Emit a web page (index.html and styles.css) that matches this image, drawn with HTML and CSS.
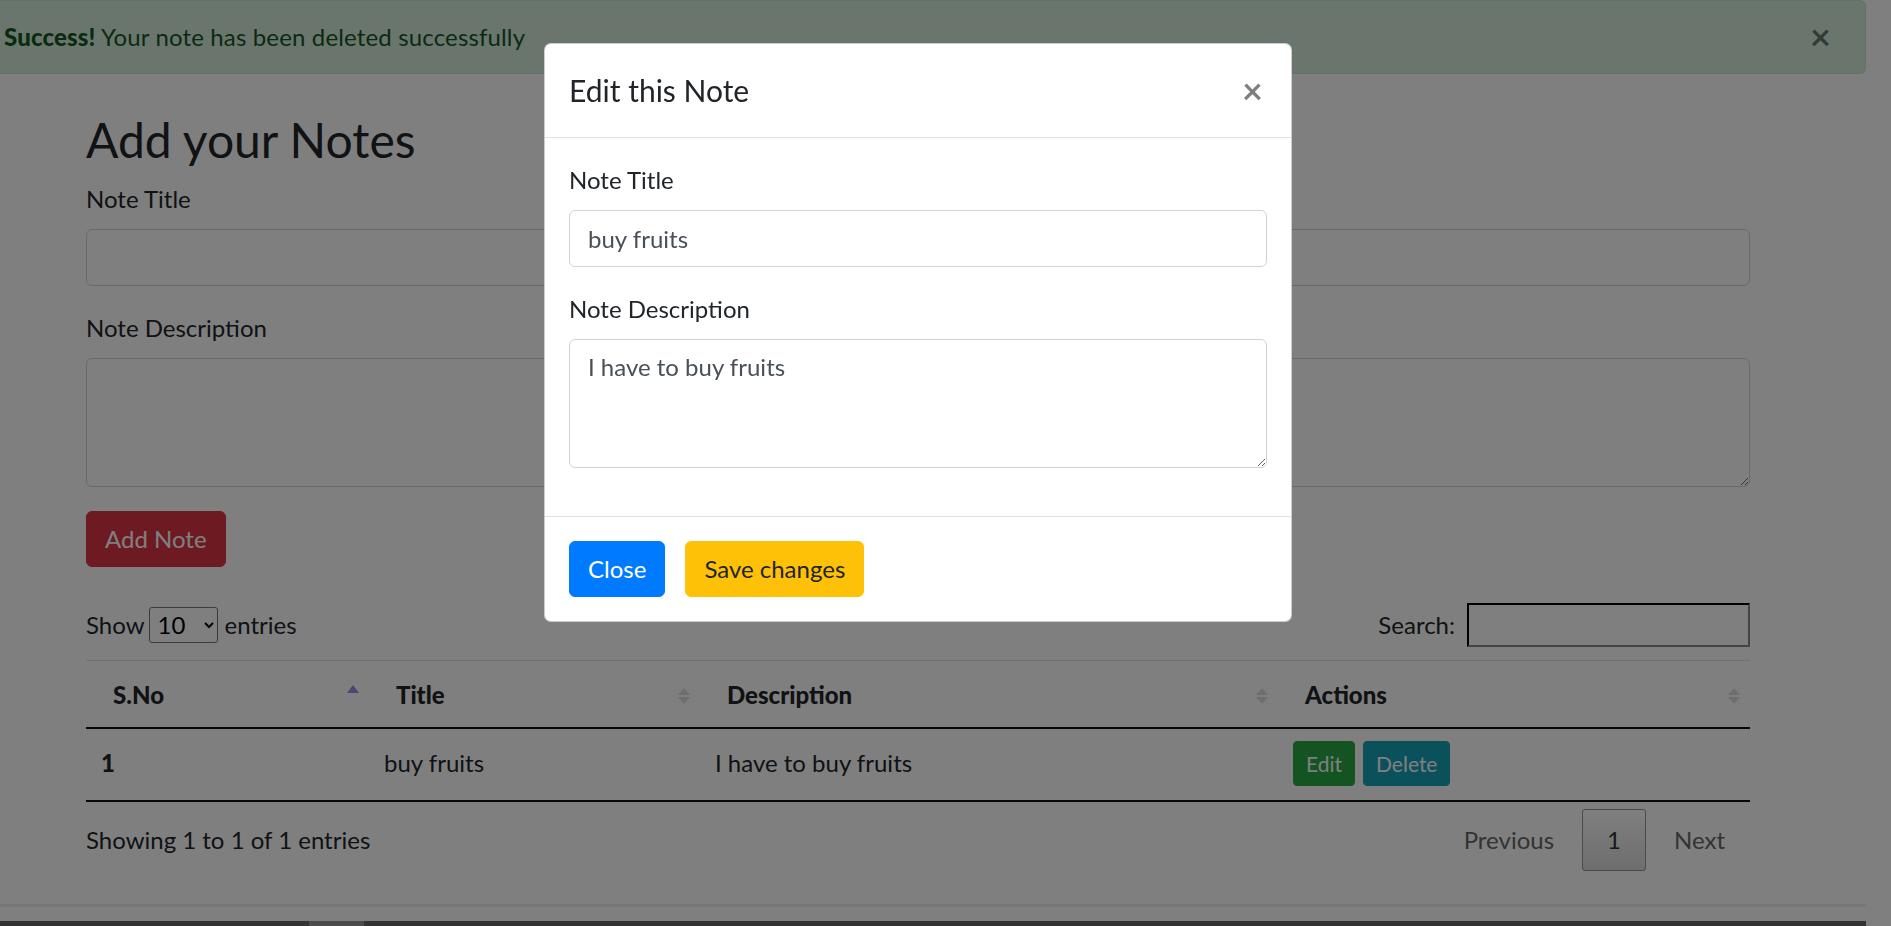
FILE: index.html
```html
<!DOCTYPE html>
<html lang="en">
<head>
<meta charset="utf-8">
<title>Notes</title>
<link rel="stylesheet" href="styles.css">
</head>
<body>
<div class="page">
  <div class="alert">
    <span><strong>Success!</strong> Your note has been deleted successfully</span>
    <button class="alert-close" type="button">&times;</button>
  </div>

  <div class="container">
    <h2 class="heading">Add your Notes</h2>
    <form class="note-form">
      <div class="form-group">
        <label class="form-label">Note Title</label>
        <input class="form-control" type="text">
      </div>
      <div class="form-group">
        <label class="form-label">Note Description</label>
        <textarea class="form-control form-area" rows="3"></textarea>
      </div>
      <button class="btn btn-danger" type="button">Add Note</button>
    </form>

    <div class="dt-wrapper">
      <div class="dt-top">
        <label class="dt-length">Show <select class="dt-select"><option>10</option></select> entries</label>
        <label class="dt-search">Search:<input class="dt-search-input" type="search"></label>
      </div>

      <table class="dt-table">
        <colgroup>
          <col class="col-sno"><col class="col-title"><col class="col-desc"><col class="col-actions">
        </colgroup>
        <thead>
          <tr>
            <th class="sort sort-asc">S.No</th>
            <th class="sort sort-both">Title</th>
            <th class="sort sort-both">Description</th>
            <th class="sort sort-both">Actions</th>
          </tr>
        </thead>
        <tbody>
          <tr>
            <th class="row-head">1</th>
            <td>buy fruits</td>
            <td>I have to buy fruits</td>
            <td><div class="actions"><button class="btn-sm btn-success" type="button">Edit</button><button class="btn-sm btn-info" type="button">Delete</button></div></td>
          </tr>
        </tbody>
      </table>

      <div class="dt-bottom">
        <div class="dt-info">Showing 1 to 1 of 1 entries</div>
        <div class="dt-paginate">
          <span class="page-btn disabled">Previous</span>
          <span class="page-btn current">1</span>
          <span class="page-btn disabled">Next</span>
        </div>
      </div>
    </div>
  </div>

  <div class="page-rule"></div>
  <div class="dark-strip"><span class="strip-thumb"></span></div>
</div>

<div class="backdrop"></div>

<div class="modal">
  <div class="modal-header">
    <h5 class="modal-title">Edit this Note</h5>
    <button class="modal-close" type="button">&times;</button>
  </div>
  <div class="modal-body">
    <div class="form-group">
      <label class="form-label">Note Title</label>
      <input class="form-control" type="text" value="buy fruits">
    </div>
    <div class="form-group">
      <label class="form-label">Note Description</label>
      <textarea class="form-control form-area" rows="3">I have to buy fruits</textarea>
    </div>
  </div>
  <div class="modal-footer">
    <button class="btn btn-primary" type="button">Close</button>
    <button class="btn btn-warning" type="button">Save changes</button>
  </div>
</div>
</body>
</html>
```

FILE: styles.css
```css
* { box-sizing: border-box; }

html, body {
  margin: 0;
  height: 926px;
  overflow: hidden;
}

body {
  width: 1891px;
  font-family: "Lato", "Noto Sans", sans-serif;
  font-size: 24px;
  line-height: 1.5;
  color: #212529;
  background: #fff;
}

.page { width: 1866px; }

/* alert */
.alert {
  position: relative;
  display: flex;
  align-items: center;
  height: 74px;
  padding: 0 4px;
  margin-bottom: 24px;
  background: #d4edda;
  border: 1px solid #c3e6cb;
  border-left: 0;
  border-radius: 0 6px 6px 0;
  color: #155724;
  letter-spacing: .15px;
}
.alert strong { font-weight: 900; }
.alert-close {
  position: absolute;
  right: 34px;
  top: 17px;
  padding: 0;
  border: 0;
  background: none;
  font-family: inherit;
  font-size: 36px;
  line-height: 36px;
  font-weight: 700;
  color: #000;
  opacity: .5;
}

/* container */
.container {
  width: 1664px;
  margin-left: 86px;
  padding-top: 13px;
}
.heading {
  margin: 0 0 12px;
  font-size: 48px;
  line-height: 1.2;
  font-weight: 400;
}
.form-group { margin-bottom: 24px; }
.form-label {
  display: block;
  margin-bottom: 12px;
}
.form-control {
  display: block;
  width: 100%;
  height: 57px;
  padding: 9px 18px;
  font-family: inherit;
  font-size: 24px;
  line-height: 1.5;
  color: #495057;
  background: #fff;
  border: 1px solid #ced4da;
  border-radius: 6px;
}
.form-area { height: 129px; resize: vertical; }

.btn {
  display: inline-block;
  padding: 9px 18px;
  font-family: inherit;
  font-size: 24px;
  line-height: 1.5;
  border: 1px solid transparent;
  border-radius: 6px;
  color: #fff;
}
.btn-danger { background: #dc3545; border-color: #dc3545; }
.btn-primary { background: #007bff; border-color: #007bff; }
.btn-warning { background: #ffc107; border-color: #ffc107; color: #212529; }

/* datatable */
.dt-wrapper { margin-top: 36px; }
.dt-top {
  display: flex;
  justify-content: space-between;
  align-items: center;
  height: 44px;
}
.dt-length { display: flex; align-items: center; }
.dt-select {
  width: 69px;
  height: 36px;
  margin: 0 7px 0 4px;
  padding: 0 4px;
  font-family: inherit;
  font-size: 24px;
  color: #000;
  background: #fff;
  border: 1px solid #767676;
  border-radius: 3px;
}
.dt-search { display: flex; align-items: center; }
.dt-search-input {
  width: 283px;
  height: 44px;
  margin-left: 12px;
  font-size: 24px;
  border: 2px solid;
  border-color: #000 #888 #888 #000;
  background: #fff;
}

.dt-table {
  width: 100%;
  margin-top: 13px;
  border-collapse: collapse;
  table-layout: fixed;
}
.col-sno { width: 283px; }
.col-title { width: 331px; }
.col-desc { width: 578px; }
.col-actions { width: 472px; }

.dt-table thead th {
  position: relative;
  padding: 16px 27px 14px;
  text-align: left;
  font-weight: 900;
  border-top: 1px solid #dee2e6;
  border-bottom: 2px solid #111;
}
.sort::after,
.sort-both::before {
  content: "";
  position: absolute;
  right: 10px;
  width: 0;
  height: 0;
  border-left: 6px solid transparent;
  border-right: 6px solid transparent;
}
.sort-asc::after {
  top: 24px;
  border-bottom: 8px solid #9090e8;
}
.sort-both::after {
  top: 27px;
  border-bottom: 7px solid #dcdcdc;
}
.sort-both::before {
  top: 36px;
  border-top: 7px solid #dcdcdc;
}

.dt-table tbody th,
.dt-table tbody td {
  padding: 12px 15px 14px;
  text-align: left;
  vertical-align: middle;
  border-bottom: 2px solid #111;
}
.row-head { font-weight: 900; }
.actions { display: flex; gap: 8px; }
.btn-sm {
  display: inline-block;
  padding: 6px 12px;
  font-family: inherit;
  font-size: 21px;
  line-height: 1.5;
  color: #fff;
  border: 1px solid transparent;
  border-radius: 4px;
}
.btn-success { background: #28a745; border-color: #28a745; }
.btn-info { background: #17a2b8; border-color: #17a2b8; }

.dt-bottom {
  display: flex;
  justify-content: space-between;
  align-items: center;
  margin-top: 7px;
}
.dt-paginate { display: flex; }
.page-btn {
  display: inline-block;
  padding: 12px 24px;
  margin-left: 3px;
  border: 1px solid transparent;
  border-radius: 3px;
  color: #666;
}
.page-btn.current {
  color: #333;
  border-color: #979797;
  background: linear-gradient(#fff 0%, #dcdcdc 100%);
}

.page-rule {
  margin-top: 33px;
  border-top: 3px solid #ececec;
}
.dark-strip {
  display: flex;
  margin-top: 14px;
  height: 12px;
  background: #666;
}
.strip-thumb {
  width: 55px;
  margin-left: 309px;
  background: #999;
}

/* overlay */
.backdrop {
  position: fixed;
  inset: 0;
  background: rgba(0, 0, 0, .5);
}

.modal {
  position: absolute;
  left: 544px;
  top: 43px;
  width: 748px;
  background: #fff;
  border: 1px solid rgba(0, 0, 0, .2);
  border-radius: 7px;
}
.modal-header {
  display: flex;
  align-items: flex-start;
  padding: 24px;
  border-bottom: 1px solid #dee2e6;
}
.modal-title {
  margin: 0;
  font-size: 30px;
  line-height: 1.5;
  font-weight: 400;
}
.modal-close {
  margin: -24px -20px -24px auto;
  padding: 24px;
  border: 0;
  background: none;
  font-family: inherit;
  font-size: 36px;
  line-height: 45px;
  font-weight: 700;
  color: #000;
  opacity: .5;
}
.modal-body { padding: 24px; }
.modal-body .form-group:last-child { margin-bottom: 24px; }
.modal-footer {
  display: flex;
  gap: 20px;
  padding: 24px;
  border-top: 1px solid #dee2e6;
}
```
